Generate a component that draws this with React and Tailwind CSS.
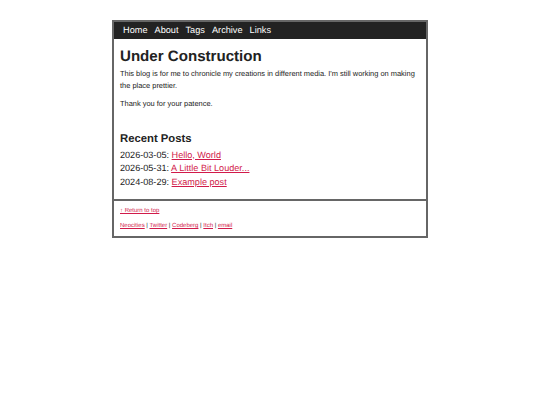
const navItems = ['Home', 'About', 'Tags', 'Archive', 'Links'];

const posts = [
  { date: '2026-03-05', title: 'Hello, World' },
  { date: '2026-05-31', title: 'A Little Bit Louder...' },
  { date: '2024-08-29', title: 'Example post' },
];

const footerLinks = ['Neocities', 'Twitter', 'Codeberg', 'Itch', 'email'];

export default function App() {
  return (
    <div className="min-h-[405px] bg-white pt-[20px] font-['Liberation_Sans',Arial,sans-serif] text-[#222] [text-rendering:geometricPrecision]">
      <div className="mx-auto w-[316px] border-2 border-[#666]">
        {/* Nav */}
        <nav className="flex h-[17px] items-center gap-[7px] bg-[#222] pl-[9px] text-[9.2px] text-white">
          {navItems.map((item) => (
            <a key={item} href="#" className="leading-none">
              {item}
            </a>
          ))}
        </nav>

        {/* Main */}
        <main className="pl-[6px] pr-[3px] pb-[10px]">
          <h1 className="mt-[8px] text-[15.1px] font-bold leading-[20px]">Under Construction</h1>
          <p className="mt-[1px] text-[7.45px] leading-[11.5px]">
            This blog is for me to chronicle my creations in different media. I'm still working on making the place prettier.
          </p>
          <p className="mt-[7px] text-[7.45px] leading-[11.5px]">Thank you for your patence.</p>

          <h2 className="mt-[21px] text-[11.3px] font-bold leading-[16px]">Recent Posts</h2>
          <ul className="mt-[2px] text-[9.1px] leading-[13.5px]">
            {posts.map((p) => (
              <li key={p.date}>
                {p.date}:{' '}
                <a href="#" className="text-[#d11a4a] underline">
                  {p.title}
                </a>
              </li>
            ))}
          </ul>
        </main>

        {/* Footer */}
        <footer className="border-t-2 border-[#666] px-[6px] pb-[6px] pt-[6px] text-[6px] leading-[8px]">
          <a href="#" className="text-[#d11a4a] underline">
            ↑ Return to top
          </a>
          <p className="mt-[7px]">
            {footerLinks.map((l, i) => (
              <span key={l}>
                {i > 0 && ' | '}
                <a href="#" className="text-[#d11a4a] underline">
                  {l}
                </a>
              </span>
            ))}
          </p>
        </footer>
      </div>
    </div>
  );
}
